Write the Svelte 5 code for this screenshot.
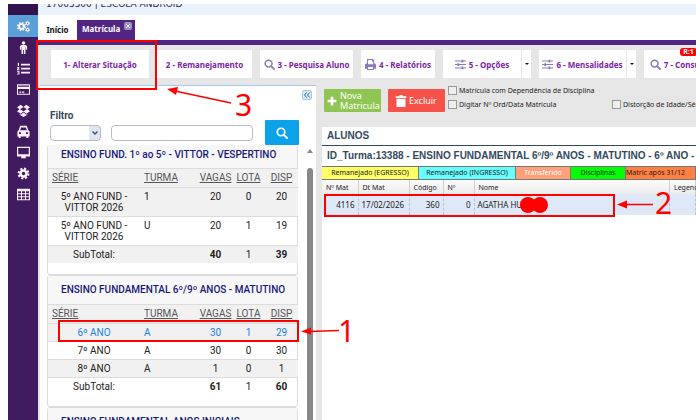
<script>
  const nav = ['cogs', 'person', 'list', 'card', 'box', 'car', 'screen', 'cog', 'grid'];
  const tools = [
    { label: '1- Alterar Situação', w: 98 },
    { label: '2 - Remanejamento', w: 95 },
    { label: '3 - Pesquisa Aluno', icon: 'search', w: 93 },
    { label: '4 - Relatórios', icon: 'print', w: 74 },
    { label: '5 - Opções', icon: 'sliders', w: 78, split: true },
    { label: '6 - Mensalidades', icon: 'sliders', w: 87, split: true },
    { label: '7 - Consulta', icon: 'search', w: 72, badge: 'R:1' }
  ];
  const groups = [
    {
      title: 'ENSINO FUND. 1º ao 5º - VITTOR - VESPERTINO',
      rows: [
        ['5º ANO FUND - VITTOR 2026', '1', 20, 0, 20],
        ['5º ANO FUND - VITTOR 2026', 'U', 20, 1, 19]
      ],
      total: [40, 1, 39]
    },
    {
      title: 'ENSINO FUNDAMENTAL 6º/9º ANOS - MATUTINO',
      rows: [
        ['6º ANO', 'A', 30, 1, 29],
        ['7º ANO', 'A', 30, 0, 30],
        ['8º ANO', 'A', 1, 0, 1]
      ],
      total: [61, 1, 60]
    },
    { title: 'ENSINO FUNDAMENTAL ANOS INICIAIS', rows: [], total: null }
  ];
  let selected = $state('6º ANO');
</script>

{#snippet icon(name)}
  <svg class="icon" viewBox="0 0 16 16" aria-hidden="true">
    {#if name === 'cogs'}
      <circle cx="5.5" cy="8" r="3" fill="none" stroke="currentColor" stroke-width="2.4" />
      <circle cx="5.5" cy="8" r="4.8" fill="none" stroke="currentColor" stroke-width="1.6" stroke-dasharray="2 1.77" />
      <circle cx="13" cy="4" r="1.6" fill="none" stroke="currentColor" stroke-width="1.3" />
      <circle cx="13" cy="4" r="2.6" fill="none" stroke="currentColor" stroke-width="1" stroke-dasharray="1.3 1.4" />
      <circle cx="13" cy="12" r="1.6" fill="none" stroke="currentColor" stroke-width="1.3" />
      <circle cx="13" cy="12" r="2.6" fill="none" stroke="currentColor" stroke-width="1" stroke-dasharray="1.3 1.4" />
    {:else if name === 'person'}
      <circle cx="8" cy="2.4" r="2.1" />
      <path d="M5.2 5h5.6l1.6 1.4v4.4h-1.5V7.6h-.5V16H8.5v-5h-1v5H5.6V7.6h-.5v3.2H3.6V6.4z" />
    {:else if name === 'list'}
      <path d="M5 2h11v2.3H5zM5 7h11v2.3H5zM5 12h11v2.3H5zM1 1h1.5v4H1zM0 6h3v1.5L1.5 9H3v1H0V8.5L1.6 7H0zM0 11h3v4.5H0v-1h1.9v-.8H.7v-.9h1.2V12H0z" />
    {:else if name === 'card'}
      <path fill-rule="evenodd" d="M0 1.5h16v13H0zM1.3 3v1.5h13.4V3zM1.3 7.5v5.7h13.4V7.5zM3 10.5h2v1.4H3zM6 10.5h3v1.4H6z" />
    {:else if name === 'box'}
      <path d="M4.6 1 8 3.6 11.4 1 16 3.9l-3.1 2.5L16 9l-4.6 2.9L8 9.200l-3.400 2.700L0 9l3.100-2.600L0 3.900zM8 3.800 3.800 6.400 8 9l4.200-2.600zM4.600 13.100 8 10.400l3.400 2.700 1.400-.9v1L8 16l-4.800-2.800v-1z" fill-rule="evenodd" />
    {:else if name === 'car'}
      <path fill-rule="evenodd" d="M4 1h8l2 5.5 1.5 1.500v6H14v2h-2.500v-2h-7v2H2v-2H.5V8L2 6.500zM5 3 3.900 6.500h8.200L11 3zM2.500 9v2H5V9zM11 9v2h2.500V9z" />
    {:else if name === 'screen'}
      <path fill-rule="evenodd" d="M0 1h16v12h-5.500l.5 2H5l.5-2H0zM1.500 2.400v7.800h13V2.400z" />
    {:else if name === 'cog'}
      <circle cx="8" cy="8" r="3.700" fill="none" stroke="currentColor" stroke-width="3.200" />
      <circle cx="8" cy="8" r="6" fill="none" stroke="currentColor" stroke-width="2.600" stroke-dasharray="2.500 2.210" />
    {:else if name === 'grid'}
      <path fill-rule="evenodd" d="M0 1h16v14H0zM1.300 4v2.500h3.600V4zM6.200 4v2.500h3.600V4zM11.100 4v2.500h3.600V4zM1.300 7.700v2.400h3.600V7.700zM6.200 7.700v2.400h3.600V7.700zM11.100 7.700v2.400h3.600V7.700zM1.300 11.300v2.500h3.600v-2.500zM6.200 11.300v2.500h3.600v-2.500zM11.100 11.300v2.500h3.600v-2.500z" />
    {:else if name === 'search'}
      <circle cx="6.700" cy="6.700" r="5" fill="none" stroke="currentColor" stroke-width="2.200" />
      <path d="m10.300 10.300 4.500 4.500" stroke="currentColor" stroke-width="2.600" stroke-linecap="round" />
    {:else if name === 'print'}
      <path fill-rule="evenodd" d="M3 0h8.500L13.500 2v4.500H14c1 0 2 .8 2 2V14h-3v2H3v-2H0V8.500c0-1.200 1-2 2-2h1zM4.500 1.500v6h7.500V3.500h-2v-2zM4.500 11.500v3h7v-3z" />
    {:else if name === 'sliders'}
      <path d="M0 2.300h16v1.400H0zM0 7.300h16v1.400H0zM0 12.300h16v1.400H0zM9.500 1H12v4H9.500zM3.500 6H6v4H3.500zM9.500 11H12v4H9.500z" />
    {:else if name === 'plus'}
      <path d="M6 1h4v5h5v4h-5v5H6v-5H1V6h5z" />
    {:else if name === 'trash'}
      <path d="M1 1.500h4.500L6.500 0h3l1 1.500H15V4H1zM2 5h12v11H2z" />
    {/if}
  </svg>
{/snippet}

<div class="app">
  <nav class="side" aria-label="Módulos">
    {#each nav as n, i}
      <a href="#{n}" class:active={i === 0} aria-label={n}>{@render icon(n)}</a>
    {/each}
  </nav>

  <div class="main">
    <header><span>17005500 | ESCOLA ANDROID</span></header>
    <div class="tabs">
      <button class="tab">Início</button>
      <button class="tab on">Matrícula
        <svg class="close" viewBox="0 0 8 8" aria-hidden="true"><rect width="8" height="8" rx="2" /><path d="m2.300 2.300 3.400 3.400M5.700 2.300 2.300 5.700" /></svg>
      </button>
    </div>

    <div class="toolbar">
      {#each tools as t}
        <div class="tool">
          <button class="action" style="width:{t.w}px">
            {#if t.icon}{@render icon(t.icon)}{/if}{t.label}
          </button>
          {#if t.split}<button class="drop" aria-label="Mais opções"><i></i></button>{/if}
          {#if t.badge}<b class="badge">{t.badge}</b>{/if}
        </div>
      {/each}
    </div>

    <div class="cols">
      <aside>
        <div class="collapse">
          <button aria-label="Recolher">
            <svg viewBox="0 0 8 8" aria-hidden="true"><path d="M3.700 1.500 1.500 4l2.200 2.500M6.700 1.500 4.500 4l2.200 2.500" /></svg>
          </button>
        </div>
        <form class="filter">
          <label for="kind">Filtro</label>
          <div class="fields">
            <div class="pick">
              <select id="kind"><option></option></select>
              <svg viewBox="0 0 8 8" aria-hidden="true"><path d="m1.500 2.500 2.500 2.500 2.500-2.500" /></svg>
            </div>
            <input type="text" aria-label="Texto do filtro" />
            <button type="button" aria-label="Pesquisar">{@render icon('search')}</button>
          </div>
        </form>
        <div class="scroller">
          <div class="list">
            {#each groups as g}
              <section>
                <h2>{g.title}</h2>
                {#if g.total}
                  <table>
                    <thead>
                      <tr><th class="serie">SÉRIE</th><th class="turma">TURMA</th><th>VAGAS</th><th>LOTA</th><th>DISP</th></tr>
                    </thead>
                    <tbody>
                      {#each g.rows as r}
                        <tr class:sel={r[0] === selected} onclick={() => (selected = r[0])}>
                          <td class="serie">{r[0]}</td><td class="turma">{r[1]}</td><td>{r[2]}</td><td>{r[3]}</td><td>{r[4]}</td>
                        </tr>
                      {/each}
                      <tr>
                        <td class="serie">SubTotal:</td><td></td><td><b>{g.total[0]}</b></td><td>{g.total[1]}</td><td><b>{g.total[2]}</b></td>
                      </tr>
                    </tbody>
                  </table>
                {/if}
              </section>
            {/each}
          </div>
          <div class="bar"><i></i><span></span></div>
        </div>
      </aside>

      <main>
        <div class="actions">
          <button class="new">{@render icon('plus')}<span>Nova<br />Matricula</span></button>
          <button class="del">{@render icon('trash')}Excluir</button>
          <div class="checks">
            <label><input type="checkbox" />Matrícula com Dependência de Disciplina</label>
            <div class="line">
              <label><input type="checkbox" />Digitar Nº Ord/Data Matricula</label>
              <label><input type="checkbox" />Distorção de Idade/Série</label>
            </div>
          </div>
        </div>
        <h1>ALUNOS</h1>
        <h3>ID_Turma:13388 - ENSINO FUNDAMENTAL 6º/9º ANOS - MATUTINO - 6º ANO - A</h3>
        <div class="legend">
          <span class="l1">Remanejado (EGRESSO)</span>
          <span class="l2">Remanejado (INGRESSO)</span>
          <span class="l3">Transferido</span>
          <span class="l4">Disciplinas</span>
          <span class="l5">Matric após 31/12</span>
        </div>
        <table class="students">
          <colgroup><col class="c1" /><col class="c2" /><col class="c3" /><col class="c4" /><col /><col class="c6" /></colgroup>
          <thead>
            <tr><th>Nº Mat</th><th>Dt Mat</th><th>Código</th><th>Nº</th><th>Nome</th><th>Legenda</th></tr>
          </thead>
          <tbody>
            <tr><td class="r">4116</td><td>17/02/2026</td><td class="r">360</td><td class="r">0</td><td>AGATHA HUN</td><td></td></tr>
          </tbody>
        </table>
      </main>
    </div>
  </div>

  <svg class="marks" width="696" height="420" viewBox="0 0 696 420" aria-hidden="true">
    <g fill="none" stroke="#f00" stroke-width="2">
      <rect x="37" y="41" width="119" height="48" />
      <rect x="59" y="321" width="239" height="20" />
      <rect x="325" y="195" width="289" height="21" />
    </g>
    <g stroke="#f00" stroke-width="1.500">
      <path d="M231 103 175 91" /><path d="M339 330.500 308 331.500" /><path d="M653 204.500H624" />
    </g>
    <g fill="#f00">
      <path d="m167 89 11-2-2 8z" /><path d="m301 331.500 10-4v7z" /><path d="m617 204.500 10-4v8z" />
      <circle cx="528" cy="205" r="8" /><circle cx="540" cy="205" r="8" />
      <text x="235" y="116">3</text><text x="338" y="342">1</text><text x="655" y="214">2</text>
    </g>
  </svg>
</div>

<style>
  :global(body) { background: #fff; overflow: hidden; }
  * { box-sizing: border-box; }
  button { font: inherit; border: 0; padding: 0; margin: 0; cursor: pointer; white-space: nowrap; }
  .icon { width: 12px; height: 12px; fill: currentColor; flex: none; display: block; }
  .app { position: relative; display: flex; height: 100vh; padding: 4px 0 0 8px; font: 8px 'Noto Sans', sans-serif; color: #222; overflow: hidden; }

  .side { flex: none; width: 30px; background: #401b60; border-top: 11px solid #33134d; }
  .side a { display: flex; height: 20px; align-items: center; justify-content: center; color: #fff0ff; margin-bottom: 1px; }
  .side a.active { height: 22px; background: #5b9fd8; margin-bottom: 0; }
  .side .icon { width: 13px; height: 13px; }

  .main { flex: 1; min-width: 0; display: flex; flex-direction: column; }
  header { height: 11px; flex: none; background: #eaf2fb; overflow: hidden; display: flex; align-items: flex-start; padding-left: 8px; }
  header span { font: 9px/16px 'DejaVu Sans', sans-serif; color: #35235a; margin-top: -8px; white-space: nowrap; }
  .tabs { display: flex; align-items: flex-end; height: 25px; flex: none; }
  .tab { height: 20px; width: 39px; background: none; font-weight: 700; color: #111; line-height: 18px; }
  .tab.on { width: 58px; background: #532583; color: #fff; display: flex; gap: 4px; padding-left: 5px; }
  .close { width: 8px; height: 8px; margin-top: 2px; fill: #9c92bd; stroke: #fff; flex: none; }
  .close rect { stroke: none; }

  .toolbar { border-top: 5px solid #532583; background: #e6e6e6; height: 45px; flex: none; display: flex; gap: 8px; padding: 5px 0 7px 13px; }
  .tool { position: relative; display: flex; gap: 1px; flex: none; height: 28px; }
  .action, .drop { background: #fff; color: #7d23a8; font-weight: 700; }
  .action { display: flex; align-items: center; justify-content: center; gap: 3px; border-radius: 1px; }
  .action .icon { color: #8a78bb; width: 11px; height: 11px; }
  .drop { width: 9px; display: grid; place-items: center; }
  .drop i { border: 2px solid transparent; border-top-color: #111; border-bottom: 0; }
  .badge { position: absolute; left: 36px; top: -2px; width: 17px; height: 8px; border-radius: 3px; background: #f00; color: #fff; font-size: 7px; line-height: 8px; text-align: center; }

  .cols { flex: 1; min-height: 0; display: flex; background: #e6e6e6; padding-left: 2px; }
  aside { width: 276px; flex: none; background: #fff; border-top: 1px solid #a9c9ea; display: flex; flex-direction: column; min-height: 0; }
  .collapse { display: flex; justify-content: flex-end; padding: 4px 4px 0 0; height: 24px; }
  .collapse button { width: 10px; height: 10px; border: 1px solid #a3c4e8; border-radius: 2px; background: #dfecfa; }
  .collapse svg { display: block; width: 8px; height: 8px; fill: none; stroke: #2468b0; }
  .filter label { display: block; padding-left: 10px; font: 700 10px/12px Roboto, sans-serif; color: #34495e; }
  .fields { display: flex; align-items: center; gap: 10px; padding-left: 10px; height: 21px; }
  .pick { position: relative; display: flex; }
  .pick select { width: 51px; height: 16px; border: 1px solid #b9bcc6; border-radius: 4px; appearance: none; background: linear-gradient(#dfe6ef, #dfe6ef) right / 11px 100% no-repeat, #fff; }
  .pick svg { position: absolute; right: 2px; top: 4px; width: 8px; height: 8px; fill: none; stroke: #3a5578; stroke-width: 1.500; pointer-events: none; }
  .fields input { width: 142px; height: 16px; border: 1px solid #b9bcc6; border-radius: 4px; padding: 0 4px; }
  .fields > button { width: 34px; height: 25px; background: #0ca1e8; color: #fff; display: grid; place-items: center; border-radius: 1px; margin-left: 2px; }
  .scroller { flex: 1; min-height: 0; display: flex; padding-left: 7px; gap: 9px; overflow: hidden; margin-top: 2px; }
  .list { width: 251px; font: 10px/12px Roboto, sans-serif; }
  .list section { border: 1px solid #dcdcdc; border-radius: 3px; background: #fff; padding-bottom: 11px; }
  h2 { margin: 0; height: 28px; padding-left: 13px; font: 500 10px/28px Roboto, sans-serif; color: #17177a; background: #f7f7f7; white-space: nowrap; }
  .list section:first-child { border-top: 0; }
  .list section:first-child h2 { height: 23px; line-height: 20px; }
  table { border-collapse: collapse; table-layout: fixed; width: 100%; }
  .list th { font-weight: 400; text-decoration: underline; color: #555; padding: 3px 0; width: 33px; }
  .list td { text-align: center; padding: 3px 0; line-height: 11px; vertical-align: top; color: #222; }
  .list tr { border-top: 1px solid #dcdcdc; }
  .list thead tr, .list tbody tr:nth-child(odd) { background: #f1f1f1; }
  .list th.serie { width: 92px; text-align: left; padding-left: 4px; }
  .list td.serie { padding-left: 8px; padding-right: 8px; }
  .list th.turma { width: 59px; text-align: left; padding-left: 4px; }
  .list td.turma { text-align: left; padding-left: 4px; }
  .list .sel td { color: #1583ee; }
  .bar { width: 6px; display: flex; flex-direction: column; gap: 15px; padding-top: 4px; }
  .bar i { border: 3px solid transparent; border-bottom: 4px solid #888; border-top: 0; }
  .bar span { flex: 1; background: #888; border-radius: 3px 3px 0 0; }

  main { flex: 1; min-width: 0; margin-left: 6px; background: #fff; overflow: hidden; }
  .actions { background: #e6e6e6; height: 42px; display: flex; padding: 4px 0 0 2px; }
  .actions button { color: #fff; font: 9px/10px 'Noto Sans', sans-serif; height: 23px; display: flex; align-items: center; border-radius: 1px; text-align: left; flex: none; }
  .new { width: 57px; background: #8fc552; gap: 3px; padding-left: 3px; }
  .actions .new .icon { width: 10px; height: 10px; }
  .actions .del { width: 57px; background: #f7524a; gap: 2px; padding-left: 7px; margin-left: 7px; }
  .checks { margin-left: 3px; flex: none; display: flex; flex-direction: column; gap: 4px; margin-top: -4px; font-size: 7px; }
  .checks label { display: flex; align-items: center; gap: 2px; height: 10px; white-space: nowrap; }
  .checks input { width: 9px; height: 9px; margin: 0; appearance: none; border: 1px solid #999; background: #eee; }
  .line { display: flex; }
  .line label:first-child { width: 164px; }
  h1, h3 { margin: 0; font: 700 10px/18px 'Liberation Sans', sans-serif; color: #34495e; padding-left: 5px; white-space: nowrap; overflow: hidden; }
  h1 { border-bottom: 1px solid #34495e; height: 19px; }
  h3 { height: 20px; line-height: 20px; }
  .legend { display: flex; height: 14px; font-size: 7px; line-height: 12px; border: 1px solid #777; border-width: 1px 0; text-align: center; white-space: nowrap; }
  .legend span { flex: none; border-right: 1px solid #777; }
  .l1 { width: 97px; background: #ffff66; }
  .l2 { width: 97px; background: #66ffff; }
  .l3 { width: 55px; background: #ffa07a; color: #fff; }
  .l4 { width: 55px; background: #0f0; }
  .legend .l5 { flex: 1; background: #ff8040; text-align: left; }
  .students th { height: 14px; padding: 0 0 0 4px; font-size: 7px; font-weight: 400; text-align: left; background: linear-gradient(#fafafa, #ececec); border-right: 1px solid #d0d0d0; white-space: nowrap; }
  .students td { height: 21px; padding: 0 3px; background: #dfe8f6; border-right: 1px dashed #b5c4de; white-space: nowrap; }
  .students .r { text-align: right; }
  .c1 { width: 36px; } .c2 { width: 51px; } .c3 { width: 34px; } .c4 { width: 31px; } .c6 { width: 26px; }

  .marks { position: absolute; left: 0; top: 0; pointer-events: none; }
  .marks text { font: 30px 'Noto Sans', sans-serif; }
</style>
